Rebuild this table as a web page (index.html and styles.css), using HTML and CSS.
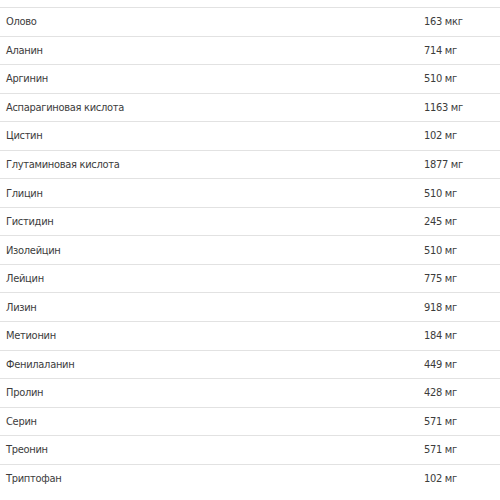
FILE: index.html
```html
<!DOCTYPE html>
<html lang="ru">
<head>
<meta charset="utf-8">
<link rel="stylesheet" href="styles.css">
</head>
<body>
<table class="nutr">
<tbody>
<tr><td class="name">Олово</td><td class="val">163 мкг</td></tr>
<tr><td class="name">Аланин</td><td class="val">714 мг</td></tr>
<tr><td class="name">Аргинин</td><td class="val">510 мг</td></tr>
<tr><td class="name">Аспарагиновая кислота</td><td class="val">1163 мг</td></tr>
<tr><td class="name">Цистин</td><td class="val">102 мг</td></tr>
<tr><td class="name">Глутаминовая кислота</td><td class="val">1877 мг</td></tr>
<tr><td class="name">Глицин</td><td class="val">510 мг</td></tr>
<tr><td class="name">Гистидин</td><td class="val">245 мг</td></tr>
<tr><td class="name">Изолейцин</td><td class="val">510 мг</td></tr>
<tr><td class="name">Лейцин</td><td class="val">775 мг</td></tr>
<tr><td class="name">Лизин</td><td class="val">918 мг</td></tr>
<tr><td class="name">Метионин</td><td class="val">184 мг</td></tr>
<tr><td class="name">Фенилаланин</td><td class="val">449 мг</td></tr>
<tr><td class="name">Пролин</td><td class="val">428 мг</td></tr>
<tr><td class="name">Серин</td><td class="val">571 мг</td></tr>
<tr><td class="name">Треонин</td><td class="val">571 мг</td></tr>
<tr><td class="name">Триптофан</td><td class="val">102 мг</td></tr>
</tbody>
</table>
</body>
</html>
```
FILE: styles.css
```css
html, body {
  margin: 0;
  padding: 0;
  background: #fff;
}
body {
  padding-top: 7px;
  font-family: "DejaVu Sans Condensed", "Liberation Sans", sans-serif;
  font-size: 11px;
  letter-spacing: -0.3px;
  color: #3c3c3c;
}
.nutr {
  width: 100%;
  border-collapse: collapse;
  table-layout: fixed;
}
.nutr tr {
  height: 28.56px;
  border-top: 1px solid #e2e2e2;
}
.nutr td {
  padding: 0 6px;
  vertical-align: middle;
  white-space: nowrap;
}
.nutr .name {
  width: 406px;
}
```
